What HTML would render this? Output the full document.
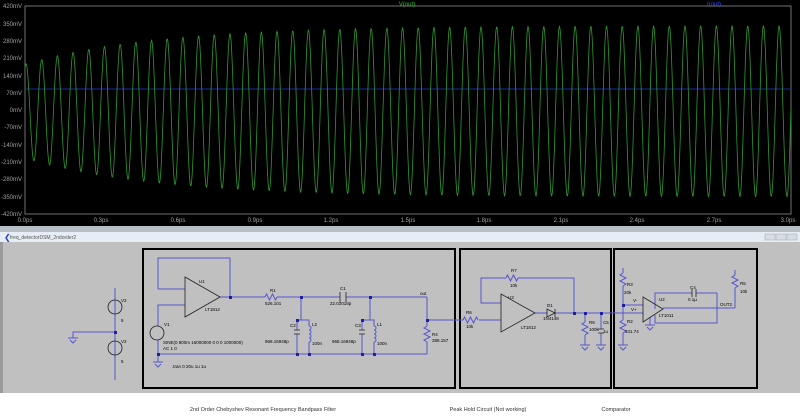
<!DOCTYPE html>
<html><head><meta charset="utf-8"><style>
html,body{margin:0;padding:0;width:800px;height:416px;overflow:hidden;background:#fff;font-family:"Liberation Sans",sans-serif}
svg{position:absolute;left:0;top:0}
</style></head><body>
<svg width="800" height="416" viewBox="0 0 800 416" xmlns="http://www.w3.org/2000/svg" font-family="Liberation Sans, sans-serif">
<rect x="0" y="0" width="800" height="226" fill="#000"/>
<rect x="25" y="6" width="766" height="208" fill="none" stroke="#707070" stroke-width="1"/>
<g fill="#a0a0a0" font-size="6" text-anchor="end">
<text x="22" y="8">420mV</text><text x="22" y="26">350mV</text><text x="22" y="43">280mV</text><text x="22" y="60">210mV</text><text x="22" y="78">140mV</text><text x="22" y="95">70mV</text><text x="22" y="112">0mV</text><text x="22" y="129">-70mV</text><text x="22" y="147">-140mV</text><text x="22" y="164">-210mV</text><text x="22" y="181">-280mV</text><text x="22" y="199">-350mV</text><text x="22" y="216">-420mV</text>
</g>
<g fill="#a0a0a0" font-size="6" text-anchor="middle">
<text x="25" y="222">0.0ps</text><text x="101" y="222">0.3ps</text><text x="178" y="222">0.6ps</text><text x="255" y="222">0.9ps</text><text x="331" y="222">1.2ps</text><text x="408" y="222">1.5ps</text><text x="484" y="222">1.8ps</text><text x="561" y="222">2.1ps</text><text x="637" y="222">2.4ps</text><text x="714" y="222">2.7ps</text><text x="788" y="222">3.0ps</text>
</g>
<text x="407" y="6" fill="#2ec02e" font-size="6" text-anchor="middle">V(out)</text>
<text x="714" y="6" fill="#3050ff" font-size="6" text-anchor="middle">I(out)</text>
<line x1="25" y1="89" x2="791" y2="89" stroke="#1a2aa0" stroke-width="1"/>
<path id="sig" fill="none" stroke="#2f9a2f" stroke-width="0.8" d=""/>
<rect x="0" y="226" width="800" height="7" fill="#b8bec6"/>
<rect x="0" y="232" width="800" height="10" fill="#e6edf4"/>
<text x="4" y="240" fill="#2040c0" font-size="8">❮</text>
<text x="10" y="239" fill="#555" font-size="5">freq_detectorDSM_2ndorder2</text>
<rect x="765" y="234" width="10" height="6" fill="#d8dde4" stroke="#9aa" stroke-width=".5"/>
<rect x="776" y="234" width="10" height="6" fill="#d8dde4" stroke="#9aa" stroke-width=".5"/>
<rect x="787" y="234" width="10" height="6" fill="#d8dde4" stroke="#9aa" stroke-width=".5"/>
<rect x="0" y="242" width="800" height="151" fill="#c0c0c0"/>
<rect x="0" y="242" width="3" height="151" fill="#9a9a9a"/>
<g fill="none" stroke="#000" stroke-width="2">
<rect x="143" y="249" width="312" height="139"/>
<rect x="460" y="249" width="151" height="139"/>
<rect x="614" y="249" width="143" height="139"/>
</g>
<g fill="none" stroke="#5656d0" stroke-width="1">
<line x1="115" y1="288" x2="115" y2="380"/>
<polyline points="115,332 73,332 73,338"/>
<path d="M68,338h10M70,340l3,3l3,-3"/>
<polyline points="158,289 158,258 230,258 230,297"/>
<line x1="158" y1="289" x2="185" y2="289"/>
<polyline points="185,305 158,305 158,326"/>
<line x1="158" y1="340" x2="158" y2="362"/>
<path d="M153,362h10M155,364l3,3l3,-3"/>
<line x1="220" y1="297" x2="265" y2="297"/>
<path d="M265,297l1.5,-3l3,6l3,-6l3,6l1.5,-3"/>
<line x1="277" y1="297" x2="340" y2="297"/>
<line x1="346" y1="297" x2="427" y2="297"/>
<line x1="427" y1="297" x2="427" y2="326"/>
<path d="M427,326l-3,2l6,3l-6,3l6,3l-6,3l3,2"/>
<line x1="427" y1="342" x2="427" y2="354"/>
<line x1="158" y1="354" x2="427" y2="354"/>
<line x1="427" y1="320" x2="463" y2="320"/>
<polyline points="301,297 301,320 297,320 297,330"/><polyline points="297,334 297,354"/>
<polyline points="301,320 309,320 309,326"/><path d="M309,326a2,2 0 0 1 0,4a2,2 0 0 1 0,4a2,2 0 0 1 0,4a2,2 0 0 1 0,4"/><line x1="309" y1="342" x2="309" y2="354"/>
<polyline points="370,297 370,320 362,320 362,330"/><polyline points="362,334 362,354"/>
<polyline points="370,320 374,320 374,326"/><path d="M374,326a2,2 0 0 1 0,4a2,2 0 0 1 0,4a2,2 0 0 1 0,4a2,2 0 0 1 0,4"/><line x1="374" y1="342" x2="374" y2="354"/>
<path d="M463,320l1.5,-3l3,6l3,-6l3,6l3,-6l1.5,3"/>
<line x1="479" y1="320" x2="501" y2="320"/>
<polyline points="501,303 481,303 481,278 506,278"/>
<path d="M506,278l1.5,-3l3,6l3,-6l3,6l1.5,-3"/>
<polyline points="518,278 574,278 574,313"/>
<line x1="535" y1="313" x2="547" y2="313"/>
<line x1="555" y1="313" x2="623" y2="313"/>
<line x1="585" y1="313" x2="585" y2="322"/><path d="M585,322l-3,2l6,3l-6,3l6,3l-3,2"/><line x1="585" y1="335" x2="585" y2="345"/>
<line x1="601" y1="313" x2="601" y2="329"/><line x1="601" y1="333" x2="601" y2="345"/>
<path d="M580,345h10M582,347l3,3l3,-3M596,345h10M598,347l3,3l3,-3"/>
<line x1="623" y1="268" x2="623" y2="273"/>
<path d="M623,273l-3,2l6,3l-6,3l6,3l-3,2"/><line x1="623" y1="286" x2="623" y2="320"/>
<path d="M623,320l-3,2l6,3l-6,3l6,3l-3,2"/><line x1="623" y1="333" x2="623" y2="345"/>
<path d="M618,345h10M620,347l3,3l3,-3"/>
<line x1="623" y1="305" x2="643" y2="305"/>
<line x1="643" y1="313" x2="623" y2="313"/>
<polyline points="650,317 650,325"/><path d="M645,325h10M647,327l3,3l3,-3"/>
<polyline points="655,309 655,293 692,293"/><line x1="696" y1="293" x2="717" y2="293"/>
<polyline points="717,293 717,323 655,323 655,315"/>
<line x1="663" y1="308" x2="735" y2="308"/>
<line x1="735" y1="270" x2="735" y2="275"/>
<path d="M735,275l-3,2l6,3l-6,3l6,3l-3,2"/><line x1="735" y1="288" x2="735" y2="308"/>
</g>
<g fill="none" stroke="#202020" stroke-width=".8">
<circle cx="115" cy="307" r="7"/><circle cx="115" cy="348" r="7"/><circle cx="157" cy="333" r="7"/>
<path d="M185,277L220,297L185,317Z"/>
<path d="M501,294L535,313L501,332Z"/>
<path d="M643,297L663,309L643,322Z"/>
<path d="M340,292v10M346,292v10M294,330h6M294,334h6M359,330h6M359,334h6M598,329h6M598,333h6M692,289v8M696,289v8"/>
<path d="M547,309v8l8,-4z M555,309v8"/>
</g>
<g fill="#2020a0">
<rect x="114" y="331" width="3" height="3"/><rect x="229" y="296" width="3" height="3"/><rect x="300" y="296" width="3" height="3"/><rect x="369" y="296" width="3" height="3"/><rect x="296" y="319" width="3" height="3"/><rect x="308" y="353" width="3" height="3"/><rect x="361" y="319" width="3" height="3"/><rect x="373" y="353" width="3" height="3"/><rect x="296" y="353" width="3" height="3"/><rect x="361" y="353" width="3" height="3"/><rect x="426" y="319" width="3" height="3"/><rect x="157" y="353" width="3" height="3"/>
<rect x="573" y="312" width="3" height="3"/><rect x="584" y="312" width="3" height="3"/><rect x="600" y="312" width="3" height="3"/><rect x="622" y="304" width="3" height="3"/>
</g>
<g fill="#000" font-size="4.5">
<text x="121" y="302">V3</text><text x="121" y="322">5</text><text x="121" y="343">V2</text><text x="121" y="363">5</text>
<text x="164" y="326">V1</text><text x="163" y="344">SINE(0 800m 16000000 0 0 0 1000000)</text><text x="163" y="350">AC 1 0</text><text x="172" y="368">.tran 0 20u 1u 1u</text>
<text x="199" y="283">U1</text><text x="205" y="311">LT1812</text>
<text x="270" y="292">R1</text><text x="265" y="305">526.101</text><text x="340" y="290">C1</text><text x="330" y="305">22.02018p</text>
<text x="290" y="327">C2</text><text x="265" y="343">968.16948p</text><text x="312" y="326">L2</text><text x="312" y="345">100n</text>
<text x="355" y="327">C3</text><text x="332" y="343">968.16948p</text><text x="377" y="326">L1</text><text x="377" y="345">100n</text>
<text x="420" y="295">out</text><text x="432" y="336">R4</text><text x="432" y="342">388.157</text>
<text x="466" y="314">R6</text><text x="466" y="328">10k</text><text x="511" y="272">R7</text><text x="510" y="287">10k</text>
<text x="508" y="299">U3</text><text x="521" y="329">LT1812</text><text x="547" y="307">D1</text><text x="543" y="320">1N4148</text>
<text x="589" y="324">R8</text><text x="589" y="331">100k</text><text x="603" y="324">C5</text><text x="603" y="333">1u</text>
<text x="627" y="286">R3</text><text x="624" y="294">20k</text><text x="627" y="323">R2</text><text x="625" y="333">341.74</text>
<text x="633" y="302">V-</text><text x="631" y="311">V+</text><text x="659" y="301">U2</text><text x="659" y="317">LT1011</text>
<text x="690" y="289">C4</text><text x="688" y="301">0.1µ</text><text x="720" y="306">OUT2</text><text x="740" y="285">R5</text><text x="740" y="293">10k</text>
</g>
<g fill="#333" font-size="5.5" text-anchor="middle">
<text x="263" y="411">2nd Order Chebyshev Resonant Frequency Bandpass Filter</text>
<text x="488" y="411">Peak Hold Circuit (Not working)</text>
<text x="616" y="411">Comparator</text>
</g>
</svg>
<script>
(function(){var d="";for(var x=25;x<=791;x+=0.5){var A=190+155*(1-Math.exp(-(x-25)/130));var v=-5+A*Math.cos(2*Math.PI*(x-26)/15.69);var y=110-v*208/840;d+=(x==25?"M":"L")+x.toFixed(1)+","+y.toFixed(1);}document.getElementById("sig").setAttribute("d",d);})();
</script>
</body></html>
